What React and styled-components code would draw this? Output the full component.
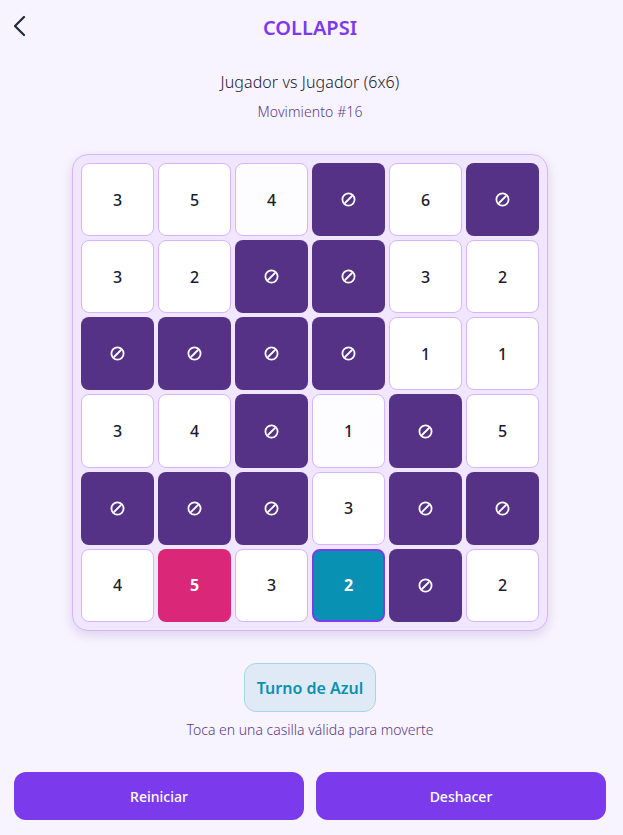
import React from 'react';
import styled, { createGlobalStyle } from 'styled-components';

const GlobalStyle = createGlobalStyle`
  html, body {
    margin: 0;
    padding: 0;
    background: #f8f4ff;
  }
`;

const Screen = styled.div`
  width: 620px;
  height: 835px;
  box-sizing: border-box;
  padding: 0 14px;
  display: flex;
  flex-direction: column;
  align-items: center;
  font-family: "Noto Sans", "Open Sans", sans-serif;
  color: #1c1a2e;
`;

const Header = styled.div`
  align-self: stretch;
  height: 55px;
  display: flex;
  align-items: center;
  justify-content: center;
  position: relative;
`;

const BackButton = styled.button`
  position: absolute;
  left: 0;
  top: 14px;
  width: 24px;
  height: 24px;
  padding: 0;
  border: 0;
  background: none;
  color: #1e293b;
`;

const Title = styled.h1`
  margin: 0;
  font-size: 20px;
  line-height: 55px;
  font-weight: 600;
  color: #7c3aed;
`;

const Mode = styled.div`
  margin-top: 16px;
  font-size: 16px;
  line-height: 22px;
  font-weight: 300;
  letter-spacing: 0.08px;
`;

const MoveCount = styled.div`
  margin-top: 9px;
  font-size: 14px;
  line-height: 20px;
  font-weight: 300;
  letter-spacing: 0.1px;
  color: #5b3a8c;
`;

const Board = styled.div`
  margin-top: 32px;
  box-sizing: border-box;
  width: 476px;
  height: 477px;
  padding: 8px;
  display: grid;
  grid-template-columns: repeat(6, 1fr);
  grid-template-rows: repeat(6, 1fr);
  gap: 4px;
  background: #f0e6ff;
  border: 1px solid #d8b4fe;
  border-radius: 16px;
  box-shadow: 0 4px 12px rgba(60, 30, 120, 0.16);
`;

const cellColors = {
  open: '#ffffff',
  faded: '#fdfcff',
  blocked: '#553285',
  pink: '#db2777',
  blue: '#0891b2',
};

const Cell = styled.div`
  box-sizing: border-box;
  display: flex;
  align-items: center;
  justify-content: center;
  border-radius: 8px;
  font-size: 16px;
  font-weight: ${p => (p.$kind === 'pink' || p.$kind === 'blue' ? 700 : 500)};
  background: ${p => cellColors[p.$kind]};
  color: ${p => (p.$kind === 'open' || p.$kind === 'faded' ? '#1c1a2e' : '#ffffff')};
  border: ${p => {
    if (p.$kind === 'blue') return '2px solid #7c3aed';
    if (p.$kind === 'open' || p.$kind === 'faded') return '1px solid #d8b4fe';
    return '1px solid transparent';
  }};
`;

const StatusPill = styled.div`
  margin-top: 32px;
  box-sizing: border-box;
  height: 49px;
  padding: 0 12px;
  display: flex;
  align-items: center;
  border-radius: 12px;
  border: 1px solid #a8d4e6;
  background: #e0eaf6;
  color: #0891b2;
  font-size: 16px;
  font-weight: 600;
`;

const Hint = styled.div`
  margin-top: 8px;
  font-size: 14px;
  line-height: 20px;
  font-weight: 300;
  color: #5b3a8c;
`;

const Actions = styled.div`
  align-self: stretch;
  margin-top: 32px;
  display: flex;
  gap: 12px;
`;

const ActionButton = styled.button`
  flex: 1;
  height: 48px;
  border: 0;
  border-radius: 12px;
  background: #7c3aed;
  color: #ffffff;
  font-family: inherit;
  font-size: 14px;
  font-weight: 500;
`;

const BanIcon = () => (
  <svg width="15" height="15" viewBox="0 0 16 16" fill="none" stroke="currentColor" strokeWidth="1.9">
    <circle cx="8" cy="8" r="6.5" />
    <line x1="4" y1="12" x2="12" y2="4" />
  </svg>
);

const ChevronLeft = () => (
  <svg width="24" height="24" viewBox="0 0 24 24" fill="none" stroke="currentColor" strokeWidth="2.2" strokeLinecap="round" strokeLinejoin="round">
    <polyline points="10,3 1,12 10,21" />
  </svg>
);

const X = 'blocked';
const rows = [
  [3, 5, 4, X, 6, X],
  [3, 2, X, X, 3, 2],
  [X, X, X, X, 1, 1],
  [3, 4, X, 1, X, 5],
  [X, X, X, 3, X, X],
  [4, 5, 3, 2, X, 2],
];

const kindOf = (value, r, c) => {
  if (value === X) return 'blocked';
  if (r === 5 && c === 1) return 'pink';
  if (r === 5 && c === 3) return 'blue';
  if ((r === 0 && c === 2) || (r === 3 && c === 3)) return 'faded';
  return 'open';
};

export default function App() {
  return (
    <>
      <GlobalStyle />
      <Screen>
        <Header>
          <BackButton aria-label="Volver"><ChevronLeft /></BackButton>
          <Title>COLLAPSI</Title>
        </Header>
        <Mode>Jugador vs Jugador (6x6)</Mode>
        <MoveCount>Movimiento #16</MoveCount>
        <Board>
          {rows.flatMap((row, r) =>
            row.map((value, c) => (
              <Cell key={`${r}-${c}`} $kind={kindOf(value, r, c)}>
                {value === X ? <BanIcon /> : value}
              </Cell>
            ))
          )}
        </Board>
        <StatusPill>Turno de Azul</StatusPill>
        <Hint>Toca en una casilla válida para moverte</Hint>
        <Actions>
          <ActionButton>Reiniciar</ActionButton>
          <ActionButton>Deshacer</ActionButton>
        </Actions>
      </Screen>
    </>
  );
}
